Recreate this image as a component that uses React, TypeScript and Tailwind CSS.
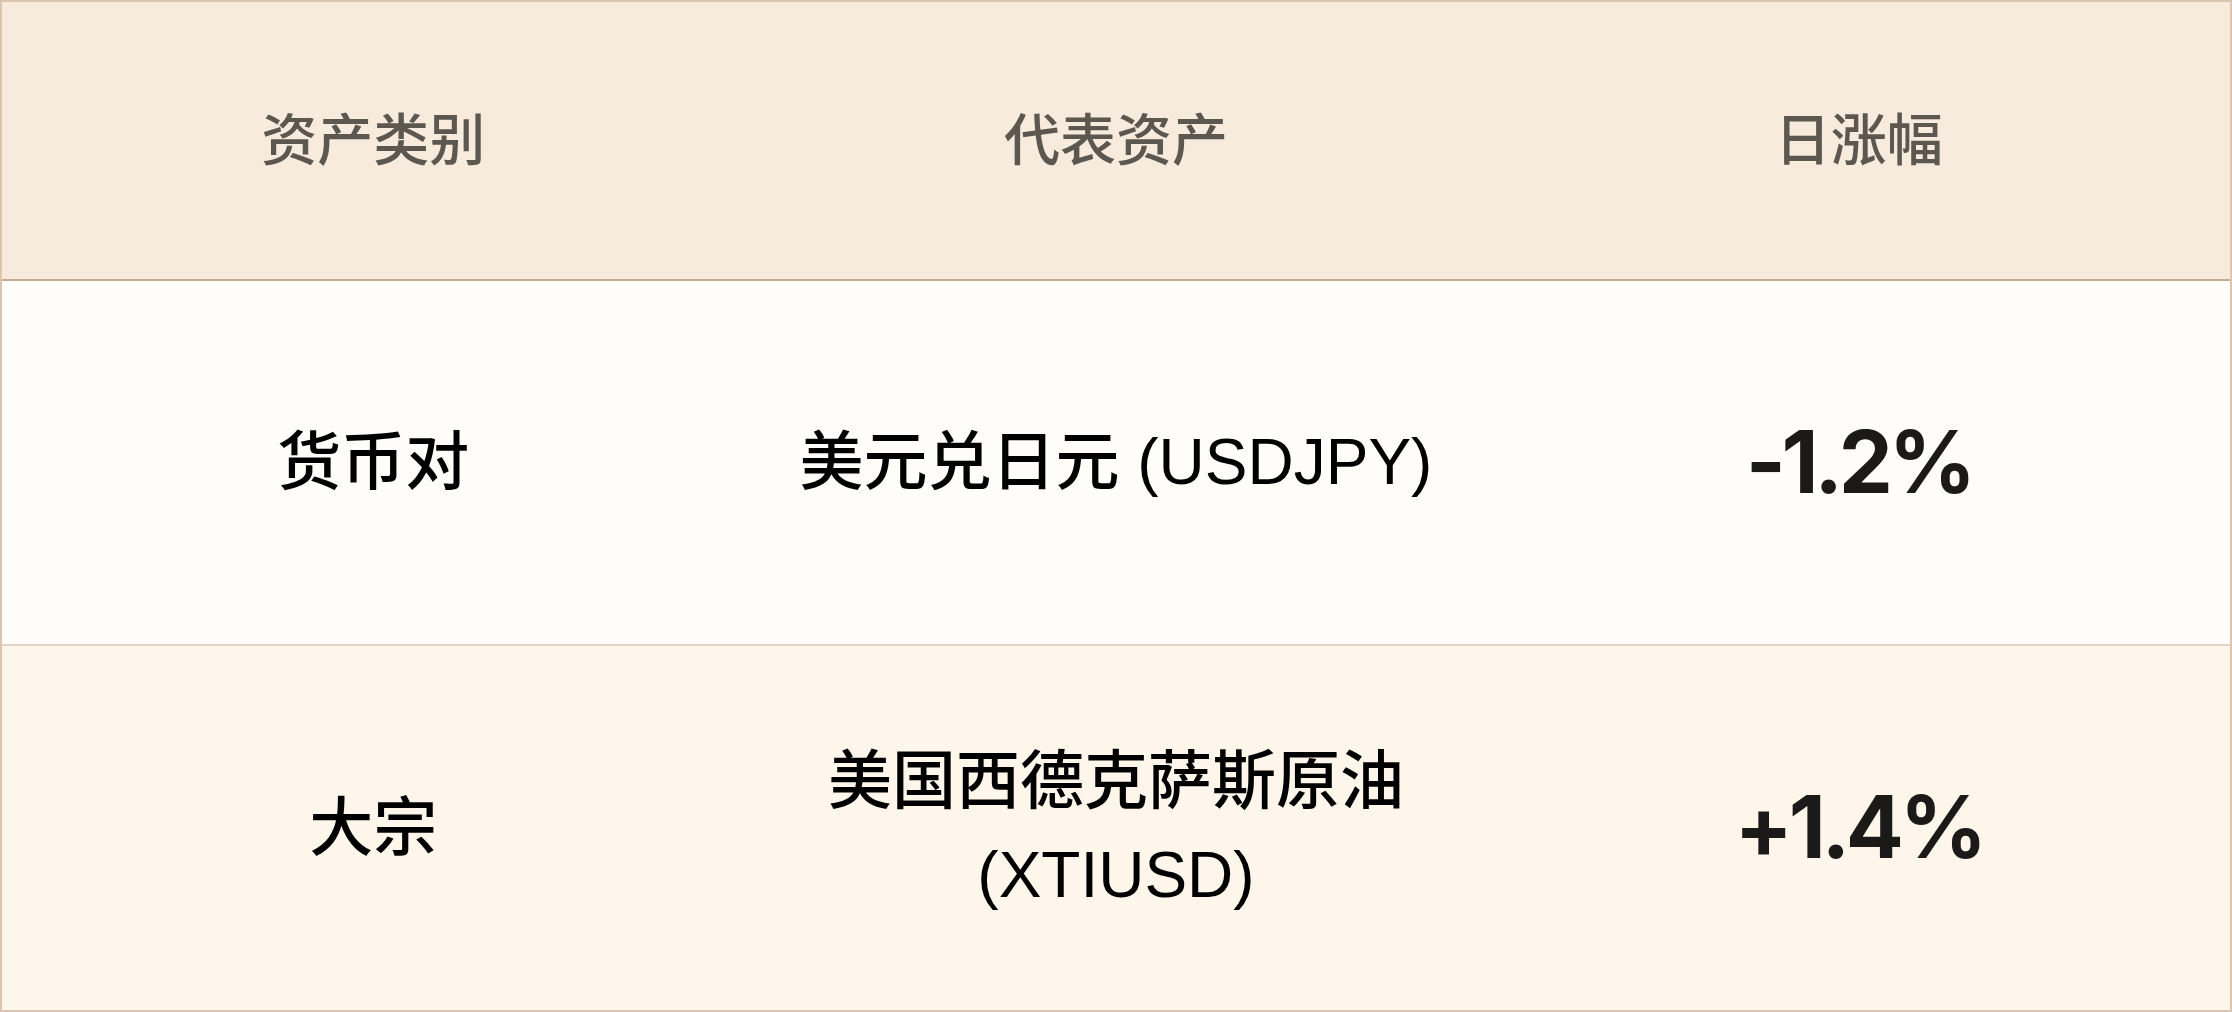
const rows = [
  { category: "货币对", asset: "美元兑日元 (USDJPY)", change: "-1.2%", bg: "bg-[#fefdfa]" },
  { category: "大宗", asset: "美国西德克萨斯原油 (XTIUSD)", change: "+1.4%", bg: "bg-[#fef6ea]" },
];

const cjk = "font-['Liberation_Sans','Noto_Sans_CJK_SC',sans-serif]";

export default function App() {
  return (
    <div className="w-[2232px] h-[1012px] bg-white">
      <div className="grid h-full grid-rows-[279px_1fr_1fr] border-2 border-[#dcc5ae]">
        <div className={`grid grid-cols-3 items-center border-b-2 border-[#c4a98f] bg-[#f7ebdd] text-[56px] font-medium text-[#5c5850] ${cjk}`}>
          <div className="text-center">资产类别</div>
          <div className="text-center">代表资产</div>
          <div className="text-center">日涨幅</div>
        </div>
        {rows.map((r, i) => (
          <div
            key={r.category}
            className={`grid grid-cols-3 items-center ${r.bg} ${i === 0 ? "border-b-2 border-[#e2d3c3]" : ""}`}
          >
            <div className={`text-center text-[64px] font-medium text-black ${cjk}`}>{r.category}</div>
            <div className={`px-5 text-center text-[64px] leading-[94px] font-medium text-black ${cjk}`}>{r.asset}</div>
            <div className="text-center font-['Inter',sans-serif] text-[86px] font-bold tracking-[-0.05em] text-[#1c1a18]">
              {r.change}
            </div>
          </div>
        ))}
      </div>
    </div>
  );
}
